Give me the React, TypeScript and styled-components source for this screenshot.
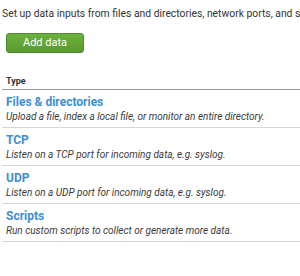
import React from "react";
import styled, { createGlobalStyle } from "styled-components";

const Global = createGlobalStyle`
  html, body { margin: 0; padding: 0; background: #fff; overflow: hidden; }
  body { font-family: Roboto, "Liberation Sans", sans-serif; color: #333; }
`;

const Page = styled.div`
  width: 300px;
  height: 276px;
  padding-left: 2px;
  box-sizing: border-box;
  overflow: hidden;
`;

const Intro = styled.p`
  margin: 0;
  padding-top: 7px;
  font-size: 10.35px;
  line-height: 14px;
  white-space: nowrap;
  color: #333;
`;

const AddButton = styled.button`
  display: block;
  margin: 12px 0 0 4px;
  width: 78px;
  height: 20px;
  border: 1px solid #4f8a2a;
  border-radius: 3px;
  background: linear-gradient(to bottom, #6cb23c, #5a9a31);
  color: #fff;
  font-family: inherit;
  font-size: 11px;
  padding: 0;
  line-height: 18px;
`;

const Table = styled.div`
  margin-top: 20px;
`;

const HeaderCell = styled.div`
  font-size: 9px;
  font-weight: 700;
  color: #333;
  padding: 0 4px;
  line-height: 16px;
  border-bottom: 1px solid #999;
`;

const Row = styled.div`
  height: 38px;
  box-sizing: border-box;
  padding: 5px 4px 0;
  border-bottom: 1px solid #d6d6d6;
`;

const Title = styled.div`
  font-size: 12px;
  font-weight: 700;
  line-height: 15px;
  color: #3e8fce;
`;

const Desc = styled.div`
  font-size: 10px;
  font-style: italic;
  line-height: 14px;
  color: #3a3a3a;
  white-space: nowrap;
`;

const rows = [
  { title: "Files & directories", desc: "Upload a file, index a local file, or monitor an entire directory." },
  { title: "TCP", desc: "Listen on a TCP port for incoming data, e.g. syslog." },
  { title: "UDP", desc: "Listen on a UDP port for incoming data, e.g. syslog." },
  { title: "Scripts", desc: "Run custom scripts to collect or generate more data." },
];

export default function App() {
  return (
    <>
      <Global />
      <Page>
        <Intro>Set up data inputs from files and directories, network ports, and scripted inputs.</Intro>
        <AddButton>Add data</AddButton>
        <Table>
          <HeaderCell>Type</HeaderCell>
          {rows.map((r) => (
            <Row key={r.title}>
              <Title>{r.title}</Title>
              <Desc>{r.desc}</Desc>
            </Row>
          ))}
        </Table>
      </Page>
    </>
  );
}
